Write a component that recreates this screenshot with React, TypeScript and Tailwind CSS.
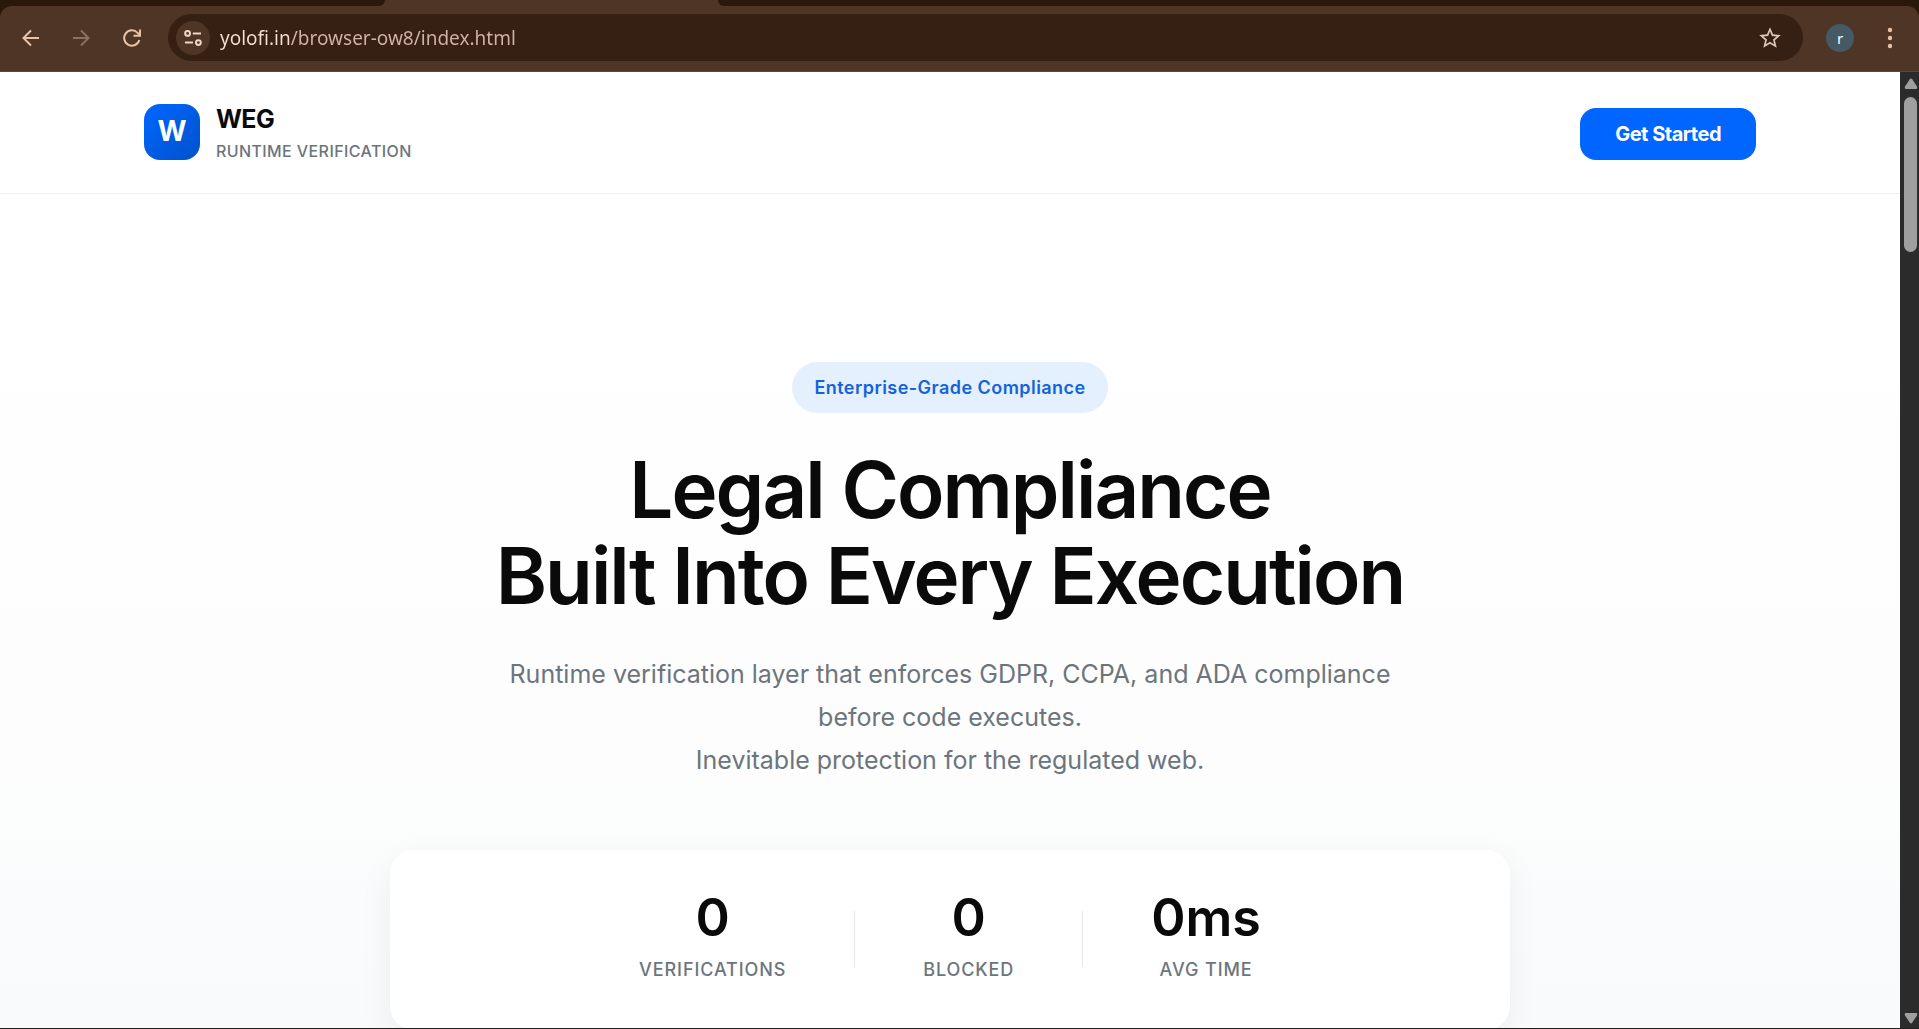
import React from "react";
import { MdStarBorder } from "react-icons/md";

const stats = [
  { value: "0", label: "Verifications" },
  { value: "0", label: "Blocked" },
  { value: "0ms", label: "Avg Time" },
];

function ArrowIcon({ className = "" }: { className?: string }) {
  return (
    <svg viewBox="0 0 18 18" fill="none" stroke="currentColor" strokeWidth="2" className={`size-[18px] ${className}`}>
      <path d="M17 9H2.5M9 1.5L1.5 9L9 16.5" />
    </svg>
  );
}

function ReloadIcon() {
  return (
    <svg viewBox="0 0 20 20" fill="none" stroke="currentColor" strokeWidth="2" className="size-5">
      <path d="M17.3 12A7.7 7.7 0 1 1 15.6 4.8L17.6 7" />
      <path d="M18 1.5V7.8H11.5" />
    </svg>
  );
}

function SiteInfoIcon() {
  return (
    <svg viewBox="0 0 18 18" fill="none" stroke="currentColor" strokeWidth="2" className="size-[18px]">
      <circle cx="3.6" cy="4.4" r="2.4" />
      <path d="M8.8 4.4H17M1 13.6H9" />
      <circle cx="14.4" cy="13.6" r="2.4" />
    </svg>
  );
}

function BrowserBar() {
  return (
    <div className="shrink-0 bg-[#2a190b] font-['Noto_Sans',sans-serif]">
      {/* bottom edge of the tab strip, open under the active tab */}
      <div className="flex h-[6px] bg-[#4e3526]">
        <div className="w-[385px] rounded-br-xl bg-[#2a190b]" />
        <div className="w-[333px]" />
        <div className="flex-1 rounded-bl-xl bg-[#2a190b]" />
      </div>

      <div className="flex h-[66px] items-center rounded-t-xl border-b border-[#5d4a3e] bg-[#4e3526] pb-[2px] text-[#e9c1a7]">
        <button type="button" aria-label="Back" className="ml-[22px]">
          <ArrowIcon />
        </button>
        <button type="button" aria-label="Forward" disabled className="ml-8 text-[#8d7160]">
          <ArrowIcon className="rotate-180" />
        </button>
        <button type="button" aria-label="Reload" className="ml-8">
          <ReloadIcon />
        </button>

        <div className="ml-[26px] flex h-[47px] min-w-0 flex-1 items-center rounded-full bg-[#352013] pr-5 pl-2">
          <button
            type="button"
            aria-label="View site information"
            className="flex size-[34px] shrink-0 items-center justify-center rounded-full bg-[#4e3526] text-[#eed6c8]"
          >
            <SiteInfoIcon />
          </button>
          <input
            type="text"
            aria-label="Address"
            defaultValue="yolofi.in/browser-ow8/index.html"
            className="ml-[10px] min-w-0 flex-1 bg-[linear-gradient(90deg,#f6dfd2_71px,#cfb5a5_71px)] bg-clip-text text-[19px] leading-7 text-transparent caret-[#f6dfd2] outline-none"
          />
          <button type="button" aria-label="Bookmark this tab" className="text-[#dcc4b6]">
            <MdStarBorder className="size-[26px]" />
          </button>
        </div>

        <button
          type="button"
          aria-label="Profile"
          className="ml-[23px] flex size-7 items-center justify-center rounded-full bg-[#455a64] text-[15px] leading-5 text-white"
        >
          r
        </button>
        <button type="button" aria-label="Menu" className="mr-[17px] ml-6">
          <svg viewBox="0 0 24 24" fill="currentColor" className="size-6">
            <circle cx="12" cy="4" r="2.2" />
            <circle cx="12" cy="12" r="2.2" />
            <circle cx="12" cy="20" r="2.2" />
          </svg>
        </button>
      </div>
    </div>
  );
}

function Scrollbar() {
  return (
    <div className="flex w-[19px] shrink-0 flex-col items-center bg-[#2b2b2b] pt-[6px] pb-1 pl-[2px]">
      <svg viewBox="0 0 14 12" className="h-3 w-[14px] fill-[#9f9f9f]">
        <path d="M5.8 1.2Q7 0 8.2 1.2L13 8.6Q13.8 11 12 11H2Q.2 11 1 8.6Z" />
      </svg>
      <div className="mt-[7px] h-[155px] w-[13px] rounded-full bg-[#9f9f9f]" />
      <svg viewBox="0 0 14 12" className="mt-auto h-3 w-[14px] rotate-180 fill-[#9f9f9f]">
        <path d="M5.8 1.2Q7 0 8.2 1.2L13 8.6Q13.8 11 12 11H2Q.2 11 1 8.6Z" />
      </svg>
    </div>
  );
}

function Header() {
  return (
    <header className="flex items-start justify-between border-b border-[#f0f0f1] bg-white px-36 py-8">
      <a href="#" className="flex items-start gap-4">
        <span className="flex size-14 items-center justify-center rounded-2xl bg-linear-135 from-[#0066ff] to-[#0052cc] pb-[2px] text-[28px] leading-8 font-bold text-white">
          W
        </span>
        <span className="flex flex-col">
          <span className="text-[25px] leading-[31px] font-bold tracking-tight text-[#0a0a0a]">WEG</span>
          <span className="mt-1.5 text-[16px] leading-5 font-medium tracking-wide text-[#6c757d] uppercase">
            Runtime Verification
          </span>
        </span>
      </a>
      <button
        type="button"
        className="mt-1 h-[52px] rounded-2xl bg-[#0066ff] px-[35px] text-[20px] leading-7 font-bold tracking-tight text-white"
      >
        Get Started
      </button>
    </header>
  );
}

function Hero() {
  return (
    <section className="flex flex-1 flex-col items-center bg-linear-to-b from-white via-[#fcfdfc] via-70% to-[#f8fafc] px-8 pt-[168px] text-center">
      <span className="rounded-full bg-[#e5f0ff] px-[22px] py-[11px] text-[18px] leading-[29px] font-semibold tracking-wide text-[#1463d8]">
        Enterprise-Grade Compliance
      </span>

      <h1 className="mt-[34px] text-[78px] leading-[86px] font-semibold tracking-tight text-[#0a0a0a]">
        Legal Compliance
        <br />
        Built Into Every Execution
      </h1>

      <p className="mt-[34px] max-w-[980px] text-[25px] leading-[43px] text-[#6c757d]">
        Runtime verification layer that enforces GDPR, CCPA, and ADA compliance
        <br />
        before code executes.
        <br />
        Inevitable protection for the regulated web.
      </p>

      <dl className="mt-[68px] flex w-full max-w-[1120px] items-center justify-center gap-[68px] rounded-3xl bg-white pt-[39px] pb-[42px] shadow-[0_11px_34px_rgba(0,0,0,0.06)]">
        {stats.map((stat, i) => (
          <React.Fragment key={stat.label}>
            {i > 0 && <div className="h-14 w-px bg-[#e4e6e9]" />}
            <div className="flex flex-col-reverse items-center">
              <dt className="mt-[5px] text-[18px] leading-9 font-medium tracking-wider text-[#6c757d] uppercase">
                {stat.label}
              </dt>
              <dd className="text-[52px] leading-[58px] font-semibold text-[#0a0a0a]">{stat.value}</dd>
            </div>
          </React.Fragment>
        ))}
      </dl>
    </section>
  );
}

export default function App() {
  return (
    <div className="flex h-screen flex-col overflow-hidden border-b border-[#1f1f1f] bg-white font-['Inter',sans-serif]">
      <BrowserBar />
      <div className="flex min-h-0 flex-1">
        <main className="flex min-w-0 flex-1 flex-col overflow-hidden">
          <Header />
          <Hero />
        </main>
        <Scrollbar />
      </div>
    </div>
  );
}
